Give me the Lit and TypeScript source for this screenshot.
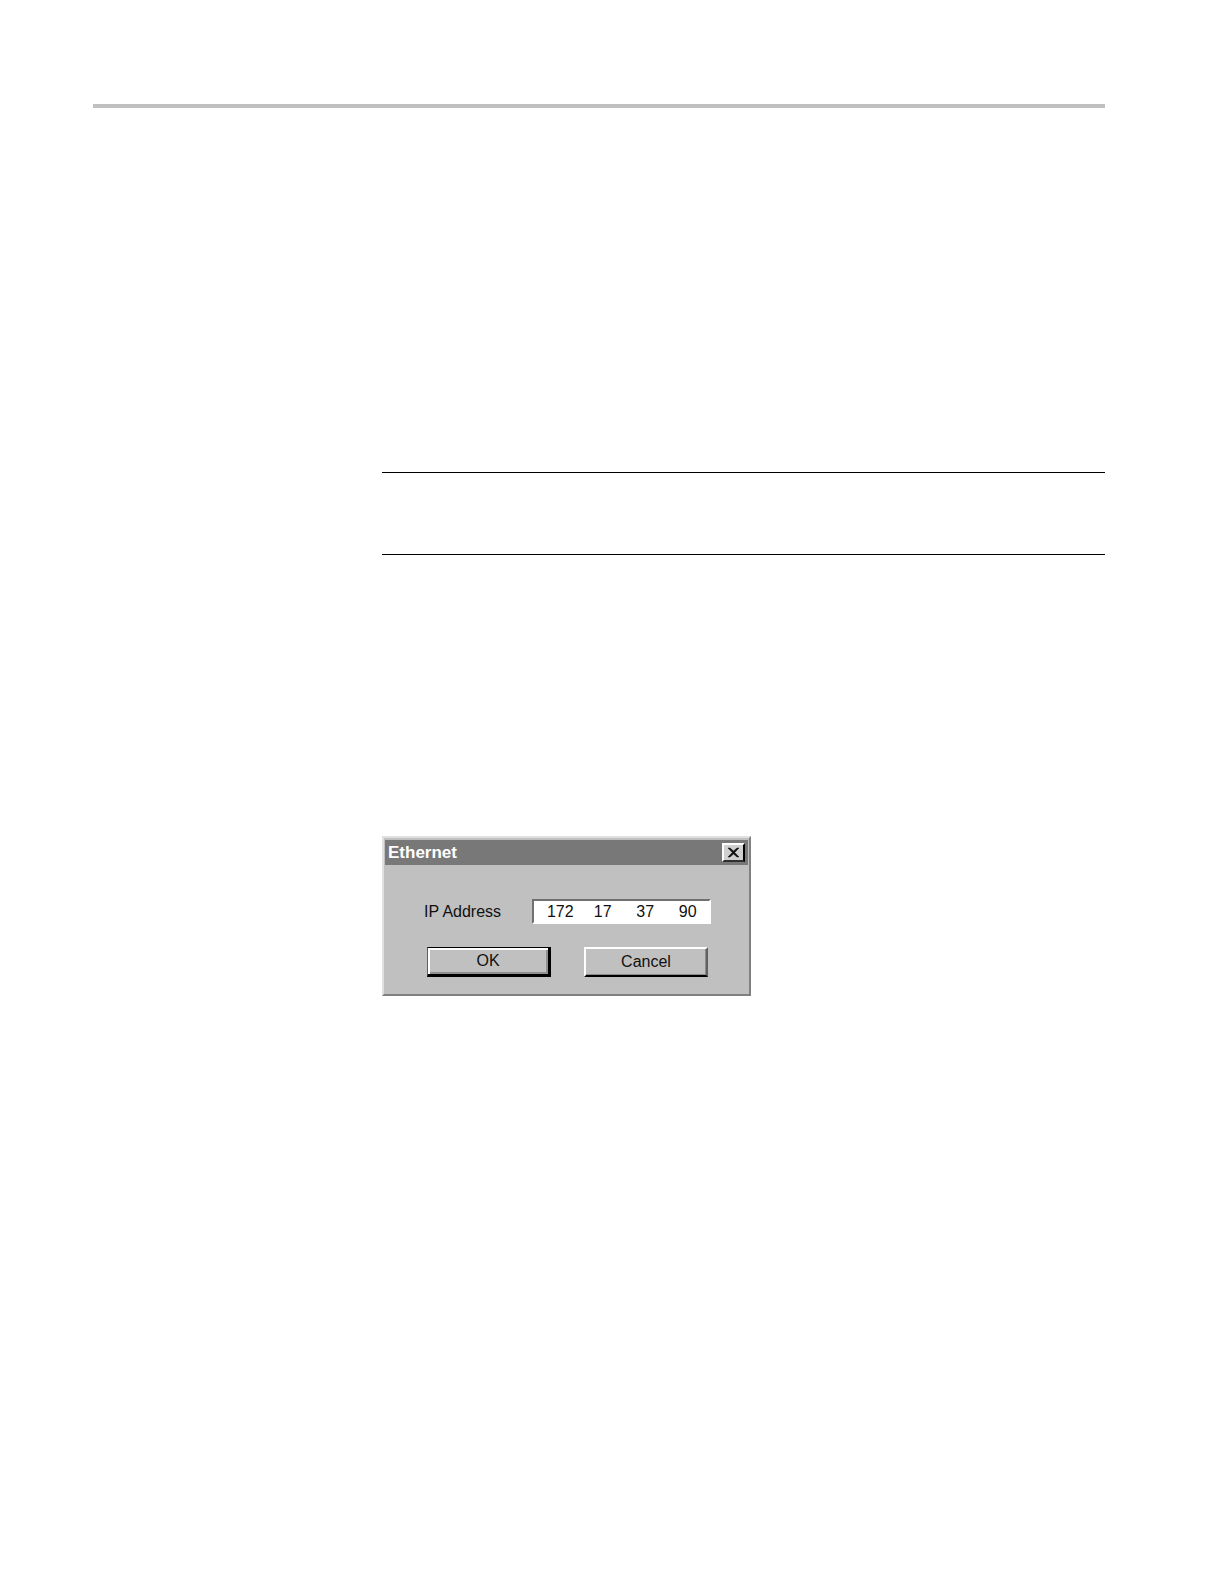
import { LitElement, html, css } from "lit";
import { customElement, property } from "lit/decorators.js";

@customElement("ethernet-dialog")
class EthernetDialog extends LitElement {
  static styles = css`
    :host {
      display: block;
      box-sizing: border-box;
      width: 369px;
      max-width: 100%;
      padding: 2px 1px;
      border: 2px solid;
      border-color: #e0e0e0 #808080 #808080 #e0e0e0;
      background: #c0c0c0;
      color: #101010;
      font-family: "Liberation Sans", Arial, sans-serif;
      font-size: 16px;
      line-height: 20px;
    }
    .titlebar {
      display: flex;
      align-items: center;
      justify-content: space-between;
      height: 25px;
      padding: 0 3px;
      background: #787878;
    }
    .title {
      margin: 0;
      color: #ffffff;
      font-size: 17px;
      font-weight: bold;
      line-height: 20px;
    }
    button {
      box-sizing: border-box;
      padding: 0;
      border: 2px solid;
      border-color: #ffffff #606060 #000000 #ffffff;
      border-radius: 0;
      background: #c0c0c0;
      color: inherit;
      font: inherit;
    }
    .close {
      display: flex;
      align-items: center;
      justify-content: center;
      width: 23px;
      height: 19px;
      border-color: #ffffff #000000 #303030 #ffffff;
      background: #d0d0d0;
    }
    .close svg {
      display: block;
      width: 13px;
      height: 11px;
    }
    form {
      padding: 34px 37px 15px 39px;
    }
    .address {
      display: flex;
      align-items: center;
      justify-content: space-between;
    }
    .octets {
      display: flex;
      box-sizing: border-box;
      width: 179px;
      height: 25px;
      padding-left: 5px;
      border: 2px solid;
      border-color: #707070 #ffffff #ffffff #707070;
      background: #ffffff;
    }
    .octets input {
      flex: 1;
      min-width: 0;
      padding: 0;
      border: 0;
      outline: 0;
      background: none;
      color: inherit;
      font: inherit;
      text-align: center;
    }
    .actions {
      display: flex;
      justify-content: space-between;
      padding: 23px 3px 0;
    }
    .action {
      width: 124px;
      height: 30px;
      box-shadow: inset -1px -1px #8c8c8c;
    }
    .action.default {
      border-width: 1px 3px 3px 1px;
      border-color: #000000 #000000 #000000 #606060;
      box-shadow: inset 2px 2px #ffffff, inset -2px -2px #909090;
    }
  `;

  @property({ type: Array }) octets = ["172", "17", "37", "90"];

  render() {
    return html`
      <div class="titlebar">
        <h1 class="title">Ethernet</h1>
        <button class="close" type="button" aria-label="Close">
          <svg viewBox="0 0 13 11" aria-hidden="true">
            <path
              d="M1 1h2l3.5 3L10 1h2L7.7 5.5 12 10h-2L6.5 7 3 10H1l4.3-4.5z"
              fill="#101010"
              stroke="#101010"
              stroke-width="0.5"
            />
          </svg>
        </button>
      </div>
      <form>
        <div class="address" role="group" aria-labelledby="ip-label">
          <label id="ip-label" for="octet-0">IP Address</label>
          <div class="octets">
            ${this.octets.map(
              (octet, i) => html`
                <input
                  id="octet-${i}"
                  type="text"
                  maxlength="3"
                  aria-label="IP Address part ${i + 1}"
                  .value=${octet}
                />
              `
            )}
          </div>
        </div>
        <div class="actions">
          <button class="action default" type="button">OK</button>
          <button class="action" type="button">Cancel</button>
        </div>
      </form>
    `;
  }
}

@customElement("app-root")
class AppRoot extends LitElement {
  static styles = css`
    :host {
      display: block;
      min-height: 100vh;
      box-sizing: border-box;
      padding: 104px 119px 0 93px;
      background: #ffffff;
    }
    .rule {
      height: 4px;
      background: #c0c0c0;
    }
    .content {
      padding: 364px 0 0 289px;
    }
    .note {
      height: 81px;
      margin-bottom: 281px;
      border: solid #000000;
      border-width: 1px 0;
    }
  `;

  render() {
    return html`
      <div class="rule"></div>
      <main class="content">
        <div class="note"></div>
        <ethernet-dialog></ethernet-dialog>
      </main>
    `;
  }
}
